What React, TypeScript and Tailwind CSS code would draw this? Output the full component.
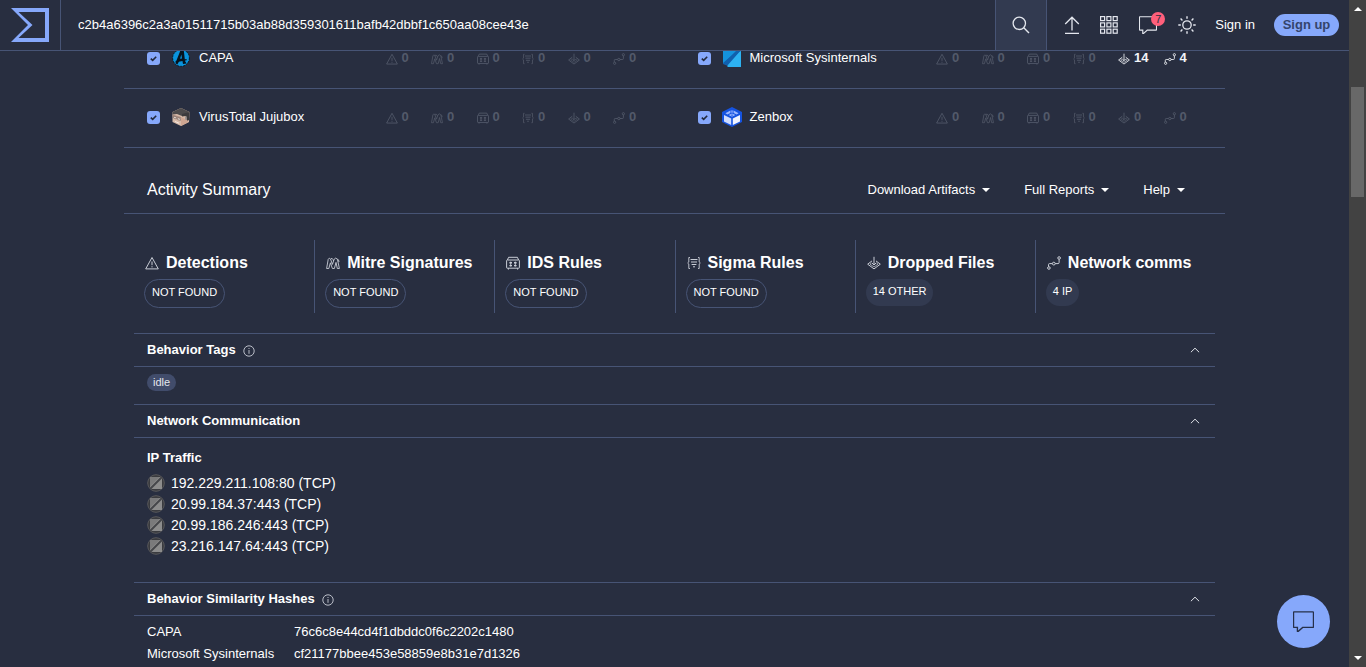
import { useState } from "react";
import type { ReactNode } from "react";
import clsx from "clsx";

type IconProps = { className?: string };

/* ---------- icons ---------- */

function Svg({
  className,
  box = "0 0 14 14",
  children,
}: IconProps & { box?: string; children: ReactNode }) {
  return (
    <svg
      viewBox={box}
      className={clsx("shrink-0", className)}
      fill="none"
      stroke="currentColor"
      aria-hidden="true"
    >
      {children}
    </svg>
  );
}

const DetectionIcon = ({ className }: IconProps) => (
  <Svg className={className}>
    <path d="M7 1.5 L13.3 12.9 H0.7 Z" />
    <path d="M7 5.5 V9.2 M7 10.2 V11.4" />
  </Svg>
);

const MitreIcon = ({ className }: IconProps) => (
  <Svg className={className}>
    <path
      strokeWidth="0.9"
      d="M0.6 12.5 L2.2 3.4 Q3.2 1 4.6 3.2 L6.4 8.4 L8.2 3.2 Q9.6 1 11.4 3.2 L13.4 12.5 H11.3 L10 6.4 L8.4 12.5 H6.4 L4.4 6.8 L2.8 12.5 Z M4.6 3.2 Q6 1 7.2 3.8 L7.6 5 M11.4 3.2 Q12.8 3 13 6"
    />
  </Svg>
);

const IdsIcon = ({ className }: IconProps) => (
  <Svg className={className}>
    <path d="M2.6 1.3 H11.4 M2.6 1.3 L1.4 4 H12.6 L11.4 1.3 M1.2 4 Q0.6 4 0.6 4.8 V11.6 Q0.6 12.2 1.2 12.2 H12.8 Q13.4 12.2 13.4 11.6 V4.8 Q13.4 4 12.8 4 M2.4 12.2 V13.6 M11.6 12.2 V13.6" />
    <path d="M3.4 6.8 H6 M8 6.8 H10.6 M3.4 9.6 H6 M8 9.6 H10.6" strokeWidth="1.4" />
    <path d="M4.7 5.6 V10.6 M9.3 5.6 V10.6" strokeWidth="0.9" />
  </Svg>
);

const SigmaIcon = ({ className }: IconProps) => (
  <Svg className={className}>
    <path d="M3 1.5 H1.8 V6 L0.7 7 L1.8 8 V12.5 H3 M11 1.5 H12.2 V6 L13.3 7 L12.2 8 V12.5 H11" strokeWidth="0.9" />
    <path d="M3.5 3.5 H10.5 M4 6 H10 M4.6 8.5 H9.4 M6 10.8 H8" />
  </Svg>
);

const DroppedIcon = ({ className }: IconProps) => (
  <Svg className={className}>
    <path d="M5 4.9 L0.7 8.2 L7 12.9 L13.3 8.2 L9 4.9" />
    <path d="M7 0.8 V8.8 M5 7 L7 9 L9 7" />
    <path d="M4.6 6.8 L3 8.2 L7 10.9 L11 8.2 L9.4 6.8" strokeWidth="0.7" />
  </Svg>
);

const NetworkIcon = ({ className }: IconProps) => (
  <Svg className={className}>
    <circle cx="1.9" cy="12" r="1.3" />
    <circle cx="6.8" cy="7.6" r="1.4" />
    <circle cx="12.1" cy="2" r="1.3" />
    <path d="M1.5 10.7 V8.6 Q1.5 7.6 2.6 7.6 H5.3 M8.2 7.6 H11 Q12.1 7.6 12.1 6.6 V3.3" />
  </Svg>
);

const InfoIcon = ({ className }: IconProps) => (
  <Svg className={className} box="0 0 12 12">
    <circle cx="6" cy="6" r="5.2" strokeWidth="0.9" />
    <path d="M6 5 V8.8 M6 3 V4" strokeWidth="0.9" />
  </Svg>
);

const ChevronUp = ({ className }: IconProps) => (
  <Svg className={className} box="0 0 10 6">
    <path d="M0.9 5.2 L5 1.2 L9.1 5.2" />
  </Svg>
);

const Caret = () => (
  <Svg className="h-1 w-2" box="0 0 8 4">
    <path d="M0 0 H8 L4 4 Z" fill="currentColor" stroke="none" />
  </Svg>
);

function Logo() {
  return (
    <svg viewBox="0 0 38 34" className="h-[34px] w-[38px]" aria-hidden="true">
      <path
        fill="#86a8fb"
        fillRule="evenodd"
        d="M0 0 H38 V34 H0 L17 17 Z M7.5 4 L21.5 17 L7.5 30 H34 V4 Z"
      />
    </svg>
  );
}

const SearchIcon = () => (
  <Svg className="size-[18px]" box="0 0 18 18">
    <circle cx="7.3" cy="7.3" r="6.2" strokeWidth="1.3" />
    <path d="M11.8 11.8 L17 17" strokeWidth="1.4" />
  </Svg>
);

const UploadIcon = () => (
  <Svg className="size-[18px]" box="0 0 18 18">
    <path d="M9 14.5 V1.5 M2.2 8 L9 1.2 L15.8 8 M2 17.3 H16" strokeWidth="1.3" />
  </Svg>
);

const AppsIcon = () => (
  <Svg className="size-[18px]" box="0 0 18 18">
    {[0.6, 6.9, 13.2].map((y) =>
      [0.6, 6.9, 13.2].map((x) => (
        <rect key={`${x}-${y}`} x={x} y={y} width="4" height="4" strokeWidth="1.2" />
      ))
    )}
  </Svg>
);

const CommentIcon = ({ className }: IconProps) => (
  <Svg className={className} box="0 0 20 20">
    <path
      d="M1 0.8 H19 Q19.5 0.8 19.5 1.4 V15 Q19.5 15.6 19 15.6 H9.2 L4.8 19.6 L4.2 19.4 V15.6 H1 Q0.5 15.6 0.5 15 V1.4 Q0.5 0.8 1 0.8 Z"
      strokeWidth="1.3"
    />
  </Svg>
);

const SunIcon = () => (
  <Svg className="size-[18px]" box="0 0 18 18">
    <circle cx="9" cy="9" r="4.2" strokeWidth="1.3" />
    <path
      d="M9 0.3 V2.8 M9 15.2 V17.7 M0.3 9 H2.8 M15.2 9 H17.7 M2.6 2.6 L4.4 4.4 M13.6 13.6 L15.4 15.4 M2.6 15.4 L4.4 13.6 M13.6 4.4 L15.4 2.6"
      strokeWidth="1.4"
    />
  </Svg>
);

/* ---------- sandbox logos ---------- */

const CapaLogo = () => (
  <svg viewBox="0 0 18 18" className="size-[18px]" aria-hidden="true">
    <circle cx="9" cy="9" r="8.4" fill="#0a93dc" stroke="#0b1a26" strokeDasharray="2 1" />
    <path d="M8.6 1 L11.8 1.4 L13 12 L14.6 14.4 L11 15 L10.4 11.6 L7.2 12 L5.4 15.6 L3.4 14.2 Z" fill="#07131d" />
    <path d="M9.4 5.4 L10 9.4 L8 9.8 Z" fill="#0a93dc" />
    <path d="M3.6 12.6 L14.6 10.6" stroke="#07131d" strokeWidth="1.4" />
  </svg>
);

const SysinternalsLogo = () => (
  <svg viewBox="0 0 18 18" className="size-[18px]" aria-hidden="true">
    <rect width="18" height="18" fill="#1160ad" />
    <path d="M0 0 H15 L0 15 Z" fill="#1492dc" />
    <path d="M16 3 L18 2 V18 H2 Z" fill="#2db2f2" />
    <path d="M0 14 L14 2 L18 1 L4 17 L0 18 Z" fill="#1160ad" />
    <path d="M0 15 L5 17 L4 18 H0 Z" fill="#282e40" />
  </svg>
);

const JujuboxLogo = () => (
  <svg viewBox="0 0 18 18" className="size-[18px]" aria-hidden="true">
    <path d="M9 0 L17.5 4 L17 14 L9 18 L0.5 14 V4 Z" fill="#d8bba9" />
    <path d="M9 0 L17.5 4 L10 8 L5 6 L0.5 6.4 V4 Z" fill="#4d4b4c" />
    <path d="M17.5 4 L17 12 L15 13 L13.6 8 L10 8.4 V6 Z" fill="#3c3b3d" />
    <path d="M9 9 L15 12 L16.4 14.2 L9 18 Z" fill="#cfa692" />
    <path d="M0.5 6.4 L9 9 V10.6 L0.5 8.6 Z" fill="#a98c80" />
    <path d="M1.6 8 L4.4 9.2 V11 L1.6 10 Z M5.6 9.6 L8.4 10.6 V12.4 L5.6 11.6 Z" fill="#f3e6df" stroke="#6a5850" strokeWidth="0.6" />
    <path d="M3 13.4 L7 15.2" stroke="#f3e6df" />
    <path d="M13 9 L14.8 8.2 V11 L13 12 Z" fill="#9d9694" />
  </svg>
);

const ZenboxLogo = () => (
  <svg viewBox="0 0 20 20" className="size-5" aria-hidden="true">
    <path d="M10 0 L20 5 V15 L10 20 L0 15 V5 Z" fill="#1553e0" />
    <path d="M2 8 L9.2 11.4 V18 L2 14.4 Z" fill="#cfdcff" />
    <path d="M18 8 L10.8 11.4 V18 L18 14.4 Z" fill="#f1f4ff" />
    <path d="M3.4 6.2 L8.4 3.4 V6 L5.4 7.4 Z M16.6 6.2 L11.6 3.4 V6 L14.6 7.4 Z M6.6 8 L10 6.6 L13.4 8 L10 9.8 Z" fill="#9db8ff" />
    <circle cx="10" cy="4.6" r="1.4" fill="#6c93f7" />
    <path d="M10 7.4 V9.4" stroke="#1553e0" />
  </svg>
);

const FlagIcon = () => (
  <svg viewBox="0 0 18 18" className="size-[18px]" aria-hidden="true">
    <circle cx="9" cy="9" r="8.3" fill="#3a3b3f" stroke="#59595b" />
    <path d="M3 3 H15 V15 H3 Z" fill="#8c8c8c" />
    <path d="M3 3 H12.5 L3 12.5 Z" fill="#7a7a7b" />
    <path d="M3 15 L15 3" stroke="#45464a" strokeWidth="2" />
  </svg>
);

/* ---------- data ---------- */

const metrics = [
  { key: "detections", title: "Detections", Icon: DetectionIcon, tag: "NOT FOUND", found: false },
  { key: "mitre", title: "Mitre Signatures", Icon: MitreIcon, tag: "NOT FOUND", found: false },
  { key: "ids", title: "IDS Rules", Icon: IdsIcon, tag: "NOT FOUND", found: false },
  { key: "sigma", title: "Sigma Rules", Icon: SigmaIcon, tag: "NOT FOUND", found: false },
  { key: "dropped", title: "Dropped Files", Icon: DroppedIcon, tag: "14 OTHER", found: true },
  { key: "network", title: "Network comms", Icon: NetworkIcon, tag: "4 IP", found: true },
];

const sandboxes = [
  { name: "CAPA", Icon: CapaLogo, counts: [0, 0, 0, 0, 0, 0] },
  { name: "Microsoft Sysinternals", Icon: SysinternalsLogo, counts: [0, 0, 0, 0, 14, 4] },
  { name: "VirusTotal Jujubox", Icon: JujuboxLogo, counts: [0, 0, 0, 0, 0, 0] },
  { name: "Zenbox", Icon: ZenboxLogo, counts: [0, 0, 0, 0, 0, 0] },
];

const ipTraffic = [
  "192.229.211.108:80 (TCP)",
  "20.99.184.37:443 (TCP)",
  "20.99.186.246:443 (TCP)",
  "23.216.147.64:443 (TCP)",
];

const hashes = [
  ["CAPA", "76c6c8e44cd4f1dbddc0f6c2202c1480"],
  ["Microsoft Sysinternals", "cf21177bbee453e58859e8b31e7d1326"],
];

/* ---------- components ---------- */

function Header() {
  const [query, setQuery] = useState(
    "c2b4a6396c2a3a01511715b03ab88d359301611bafb42dbbf1c650aa08cee43e"
  );

  return (
    <header className="relative z-10 flex h-[51px] shrink-0 items-stretch border-b border-[#475475] bg-[#282e40] text-[#e4e7ee]">
      <a
        href="#"
        aria-label="Home"
        className="flex w-[61px] items-center border-r border-[#475475] pl-[11px]"
      >
        <Logo />
      </a>
      <input
        type="text"
        aria-label="Search"
        value={query}
        onChange={(e) => setQuery(e.target.value)}
        className="min-w-0 flex-1 bg-transparent px-[17px] text-[13px] font-medium text-white outline-none"
      />
      <button
        aria-label="Search"
        className="flex w-[52px] items-center justify-center border-x border-[#475475] bg-[#323a50]"
      >
        <SearchIcon />
      </button>
      <nav className="flex items-center gap-[19px] pr-2.5 pl-4">
        <button aria-label="Upload">
          <UploadIcon />
        </button>
        <button aria-label="Apps">
          <AppsIcon />
        </button>
        <button aria-label="Notifications" className="relative ml-0.5">
          <CommentIcon className="size-[18px]" />
          <span className="absolute -top-1 left-3 flex size-3.5 items-center justify-center rounded-full bg-[#ff5f7b] text-[11px] leading-none text-[#282e40]">
            7
          </span>
        </button>
        <button aria-label="Theme" className="ml-0.5">
          <SunIcon />
        </button>
        <a href="#" className="text-[13px] font-medium text-white">
          Sign in
        </a>
        <a
          href="#"
          className="flex h-[22px] w-[65px] items-center justify-center rounded-full bg-[#86a8fb] text-[13px] font-bold text-[#34446c]"
        >
          Sign up
        </a>
      </nav>
    </header>
  );
}

function SandboxCell({ name, Icon, counts }: (typeof sandboxes)[number]) {
  const [checked, setChecked] = useState(true);

  return (
    <div className="flex h-[59px] items-center justify-between border-b border-[#475475] pr-4 pb-0.5 pl-[23px]">
      <label className="flex items-center text-[13px] font-medium">
        <span className="grid size-[13px] place-items-center">
          <input
            type="checkbox"
            checked={checked}
            onChange={() => setChecked(!checked)}
            className="col-start-1 row-start-1 size-[13px] appearance-none rounded-[3px] bg-[#86a8fb]"
          />
          {checked && (
            <Svg className="pointer-events-none col-start-1 row-start-1 size-[9px] text-[#232a3c]" box="0 0 9 9">
              <path d="M1.8 4.6 L3.7 6.4 L7.2 2.8" strokeWidth="1.6" />
            </Svg>
          )}
        </span>
        <span className="mr-2 ml-[11px] flex w-5 justify-center">
          <Icon />
        </span>
        {name}
      </label>
      <div className="grid w-[273px] grid-cols-6">
        {metrics.map((m, i) => (
          <span
            key={m.key}
            className={clsx(
              "flex items-center gap-1 text-[13px] font-bold",
              counts[i] > 0 ? "text-[#f2f4f8]" : "text-[#535a6a]"
            )}
          >
            <m.Icon className="mt-0.5 size-3" />
            {counts[i]}
          </span>
        ))}
      </div>
    </div>
  );
}

function MenuButton({ label }: { label: string }) {
  return (
    <button className="flex items-center gap-[7px] text-[13px] font-medium">
      {label}
      <Caret />
    </button>
  );
}

function Section({
  title,
  info,
  children,
}: {
  title: string;
  info?: boolean;
  children: ReactNode;
}) {
  const [open, setOpen] = useState(true);

  return (
    <section>
      <button
        onClick={() => setOpen(!open)}
        aria-expanded={open}
        className="flex h-[34px] w-full items-center justify-between border-y border-[#475475] pr-[15px] pl-[13px]"
      >
        <span className="flex items-center gap-[7px] text-[13px] font-bold">
          {title}
          {info && <InfoIcon className="mt-0.5 size-3 text-[#c9cdd6]" />}
        </span>
        <ChevronUp className={clsx("h-1.5 w-2.5 text-[#dfe2e8]", !open && "rotate-180")} />
      </button>
      {open && <div className="px-[13px]">{children}</div>}
    </section>
  );
}

function Scrollbar() {
  return (
    <div className="flex w-[17px] shrink-0 flex-col items-center bg-[#424242] py-[7px] text-white" aria-hidden="true">
      <Svg className="h-1 w-2 rotate-180" box="0 0 8 4">
        <path d="M0 0 H8 L4 4 Z" fill="currentColor" stroke="none" />
      </Svg>
      <div className="mt-[76px] h-[110px] w-[13px] bg-[#686868]" />
      <div className="flex-1" />
      <Caret />
    </div>
  );
}

export default function App() {
  return (
    <div className="flex h-screen overflow-hidden bg-[#282e40] font-['Liberation_Sans',Arial,sans-serif] text-white">
      <div className="relative flex min-w-0 flex-1 flex-col overflow-hidden">
        <Header />

        {/* the list is scrolled part way under the header */}
        <main className="mx-auto -mt-[21px] w-full max-w-[1101px]">
          <div className="grid grid-cols-2">
            {sandboxes.map((s) => (
              <SandboxCell key={s.name} {...s} />
            ))}
          </div>

          <div className="flex h-[66px] items-center justify-between border-b border-[#475475] pt-[18px] pr-10 pl-[23px]">
            <h2 className="text-base">Activity Summary</h2>
            <div className="flex gap-[34px]">
              <MenuButton label="Download Artifacts" />
              <MenuButton label="Full Reports" />
              <MenuButton label="Help" />
            </div>
          </div>

          <div className="px-2.5">
            <div className="mt-[26px] mb-5 grid grid-cols-6">
              {metrics.map((m, i) => (
                <div
                  key={m.key}
                  className={clsx("h-[73px] pt-[11px] pl-2.5", i > 0 && "border-l border-[#475475]")}
                >
                  <h3 className="flex items-center gap-[7px] pl-px text-base font-bold whitespace-nowrap">
                    <m.Icon className="size-3.5 text-[#c9cdd6]" />
                    {m.title}
                  </h3>
                  <span
                    className={clsx(
                      "mt-1 inline-block rounded-full px-[7px] pt-1 pb-[7px] text-[11px] leading-4 font-medium",
                      m.found ? "bg-[#323a50]" : "border border-[#475475]"
                    )}
                  >
                    {m.tag}
                  </span>
                </div>
              ))}
            </div>

            <Section title="Behavior Tags" info>
              <div className="flex h-[37px] items-start pt-[7px]">
                <span className="rounded-full bg-[#414c6b] px-1.5 text-[11px] leading-[17px] text-[#e4e7ee]">
                  idle
                </span>
              </div>
            </Section>

            <Section title="Network Communication">
              <div className="pt-2.5 pb-[26px]">
                <h4 className="mb-1 text-[13px] leading-5 font-bold">IP Traffic</h4>
                <ul>
                  {ipTraffic.map((ip) => (
                    <li key={ip} className="flex h-[21px] items-center gap-1.5 text-sm">
                      <FlagIcon />
                      {ip}
                    </li>
                  ))}
                </ul>
              </div>
            </Section>

            <Section title="Behavior Similarity Hashes" info>
              <table className="mt-[5px] text-[13px] font-medium">
                <tbody>
                  {hashes.map(([name, hash]) => (
                    <tr key={name} className="h-[22px]">
                      <td className="w-[147px] leading-[22px]">{name}</td>
                      <td className="leading-[22px]">{hash}</td>
                    </tr>
                  ))}
                </tbody>
              </table>
            </Section>
          </div>
        </main>

        <button
          aria-label="Open chat"
          className="absolute right-[19px] bottom-[19px] flex size-[53px] items-center justify-center rounded-full bg-[#86a8fb] text-[#26304a]"
        >
          <CommentIcon className="size-[21px]" />
        </button>
      </div>
      <Scrollbar />
    </div>
  );
}
